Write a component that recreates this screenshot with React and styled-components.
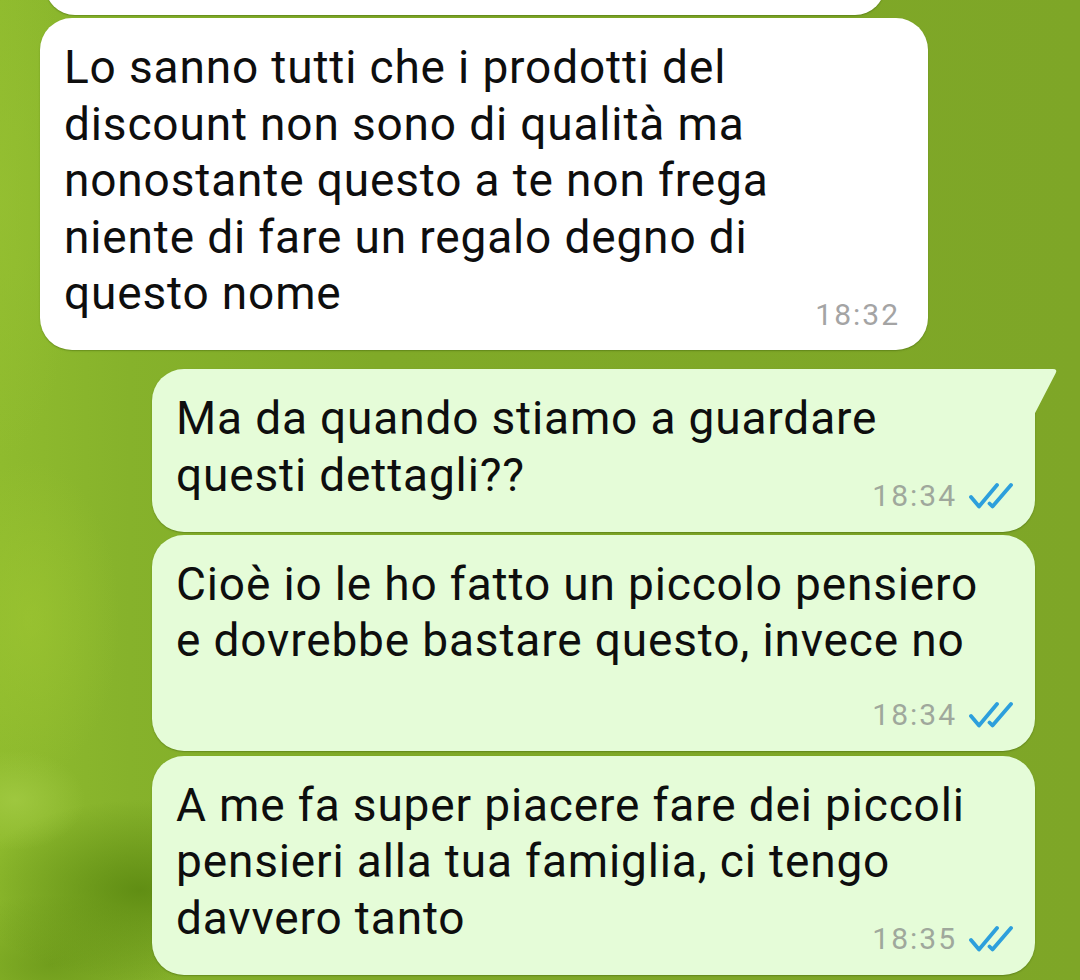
import React from "react";
import styled, { createGlobalStyle } from "styled-components";

const Global = createGlobalStyle`
  html, body { margin: 0; padding: 0; }
  body { background: #80a927; }
  * { box-sizing: border-box; }
`;

const Screen = styled.div`
  width: 1080px;
  height: 980px;
  overflow: hidden;
  display: flex;
  flex-direction: column;
  background:
    radial-gradient(ellipse 70px 50px at 15px 800px, rgba(165, 205, 70, 0.7), rgba(165, 205, 70, 0) 100%),
    radial-gradient(ellipse 170px 90px at 140px 890px, rgba(84, 130, 12, 0.75), rgba(84, 130, 12, 0) 100%),
    radial-gradient(ellipse 130px 70px at 50px 965px, rgba(95, 140, 18, 0.6), rgba(95, 140, 18, 0) 100%),
    radial-gradient(ellipse 90px 160px at 30px 620px, rgba(160, 200, 50, 0.55), rgba(160, 200, 50, 0) 100%),
    radial-gradient(ellipse 80px 260px at 0px 200px, rgba(150, 192, 50, 0.7), rgba(150, 192, 50, 0) 100%),
    linear-gradient(90deg, #8fbb2e 0%, #86b22b 12%, #80aa28 35%, #7ea627 100%);
`;

const Bubble = styled.div`
  position: relative;
  align-self: ${(p) => (p.$out ? "flex-end" : "flex-start")};
  margin-top: ${(p) => p.$gap}px;
  margin-left: ${(p) => (p.$out ? 0 : p.$left)}px;
  margin-right: ${(p) => (p.$out ? 45 : 0)}px;
  width: ${(p) => p.$w}px;
  ${(p) => (p.$h ? `height: ${p.$h}px; flex-shrink: 0;` : "")}
  background: ${(p) => (p.$out ? "#e5fcd8" : "#ffffff")};
  border-radius: 32px;
  ${(p) => (p.$tail ? "border-top-right-radius: 0;" : "")}
  padding: 21px ${(p) => (p.$out ? 21 : 28)}px 28.5px 24px;
  box-shadow: 0 1px 1.5px rgba(40, 70, 0, 0.35);
`;

const Tail = styled.svg`
  position: absolute;
  top: 0;
  right: -24px;
  width: 26px;
  height: 50px;
  overflow: visible;
`;

const Text = styled.div`
  font-family: Roboto, "Noto Sans", sans-serif;
  font-size: 46px;
  line-height: 56.5px;
  letter-spacing: 0.85px;
  color: #0e0e0e;
`;

const Line = styled.div`
  white-space: pre;
`;

const LastRow = styled.div`
  display: flex;
  justify-content: space-between;
  align-items: flex-end;
`;

const Meta = styled.div`
  display: flex;
  justify-content: flex-end;
  align-items: center;
  gap: 11px;
  margin-top: ${(p) => (p.$own ? 30 : 0)}px;
  margin-bottom: ${(p) => (p.$own ? -8.5 : -9)}px;
  font-family: Roboto, "Noto Sans", sans-serif;
  font-size: 30px;
  line-height: 32px;
  letter-spacing: 2px;
  color: ${(p) => (p.$out ? "#9fa89c" : "#a4a4a4")};
`;

const Time = styled.span`
  display: block;
`;

const Checks = styled.svg`
  width: 46px;
  height: 28px;
  display: block;
  margin-top: -2px;
`;

function DoubleCheck() {
  return (
    <Checks viewBox="0 0 46 28" fill="none" stroke="#2d9fdc" strokeWidth="3.8" strokeLinecap="round" strokeLinejoin="round">
      <path d="M3 16 L11 25.5 L29 4" />
      <path d="M21.5 22.5 L24.5 25.5 L43 4" />
    </Checks>
  );
}

const messages = [
  {
    out: false,
    gap: 3,
    lines: [
      "Lo sanno tutti che i prodotti del",
      "discount non sono di qualità ma",
      "nonostante questo a te non frega",
      "niente di fare un regalo degno di",
      "questo nome",
    ],
    time: "18:32",
  },
  {
    out: true,
    gap: 19,
    tail: true,
    lines: ["Ma da quando stiamo a guardare", "questi dettagli??"],
    time: "18:34",
  },
  {
    out: true,
    gap: 3,
    own: true,
    lines: ["Cioè io le ho fatto un piccolo pensiero", "e dovrebbe bastare questo, invece no"],
    time: "18:34",
  },
  {
    out: true,
    gap: 5,
    lines: [
      "A me fa super piacere fare dei piccoli",
      "pensieri alla tua famiglia, ci tengo",
      "davvero tanto",
    ],
    time: "18:35",
  },
];

function MetaInfo({ m }) {
  return (
    <Meta $own={m.own} $out={m.out}>
      <Time>{m.time}</Time>
      {m.out && <DoubleCheck />}
    </Meta>
  );
}

export default function App() {
  return (
    <>
      <Global />
      <Screen>
        <Bubble $left={45} $w={840} $h={60} $gap={-45} />
        {messages.map((m, i) => {
          const head = m.own ? m.lines : m.lines.slice(0, -1);
          const last = m.own ? null : m.lines[m.lines.length - 1];
          return (
            <Bubble key={i} $out={m.out} $tail={m.tail} $gap={m.gap} $left={40} $w={m.out ? 883 : 888}>
              {m.tail && (
                <Tail viewBox="0 0 26 50">
                  <path d="M-2 0 L20 0 Q25 0 22.5 4.5 L0 48 L-2 48 Z" fill="#e5fcd8" />
                </Tail>
              )}
              <Text>
                {head.map((l, j) => (
                  <Line key={j}>{l}</Line>
                ))}
                {last && (
                  <LastRow>
                    <Line>{last}</Line>
                    <MetaInfo m={m} />
                  </LastRow>
                )}
              </Text>
              {m.own && <MetaInfo m={m} />}
            </Bubble>
          );
        })}
      </Screen>
    </>
  );
}
